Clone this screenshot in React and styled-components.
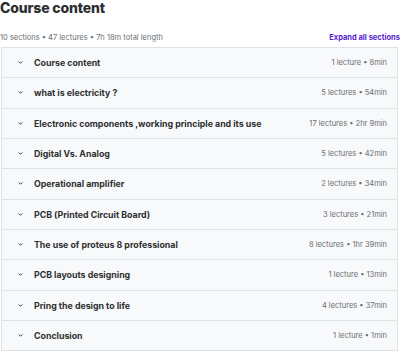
import React from "react";
import styled, { createGlobalStyle } from "styled-components";

const Global = createGlobalStyle`
  html, body { margin: 0; padding: 0; background: #fff; }
  body { font-family: Inter, "Noto Sans", sans-serif; color: #2d2f31; }
`;

const Page = styled.div`
  width: 400px;
  display: flex;
  flex-direction: column;
`;

const Title = styled.h2`
  margin: 0;
  font-size: 14px;
  line-height: 16px;
  font-weight: 800;
  letter-spacing: -0.15px;
`;

const Summary = styled.div`
  display: flex;
  justify-content: space-between;
  align-items: center;
  margin-top: 14px;
  height: 14px;
  font-size: 7.5px;
  color: #6a6f73;
`;

const Expand = styled.button`
  border: 0;
  background: none;
  padding: 0;
  font: inherit;
  font-weight: 700;
  color: #5624d0;
  cursor: pointer;
`;

const Table = styled.div`
  margin-top: 3px;
  margin-left: 1px;
  width: 397px;
  border: 1px solid #dfe3e6;
  border-bottom: 0;
  box-sizing: border-box;
`;

const Row = styled.div`
  display: flex;
  align-items: center;
  height: 29.33px;
  border-bottom: 1px solid #dfe3e6;
  background: #f8f9fa;
  padding: 0 10px 0 14px;
`;

const Chevron = styled.svg`
  width: 9px;
  height: 9px;
  flex: none;
  margin-right: 9px;
  color: #2d2f31;
`;

const SectionTitle = styled.span`
  flex: 1;
  font-size: 8.8px;
  font-weight: 700;
  color: #2d2f31;
  white-space: nowrap;
`;

const Meta = styled.span`
  font-size: 7.5px;
  color: #6a6f73;
  white-space: nowrap;
`;

const sections = [
  ["Course content", "1 lecture • 8min"],
  ["what is electricity ?", "5 lectures • 54min"],
  ["Electronic components ,working principle and its use", "17 lectures • 2hr 9min"],
  ["Digital Vs. Analog", "5 lectures • 42min"],
  ["Operational amplifier", "2 lectures • 34min"],
  ["PCB (Printed Circuit Board)", "3 lectures • 21min"],
  ["The use of proteus 8 professional", "8 lectures • 1hr 39min"],
  ["PCB layouts designing", "1 lecture • 13min"],
  ["Pring the design to life", "4 lectures • 37min"],
  ["Conclusion", "1 lecture • 1min"],
];

export default function App() {
  return (
    <Page>
      <Global />
      <Title>Course content</Title>
      <Summary>
        <span>10 sections • 47 lectures • 7h 18m total length</span>
        <Expand>Expand all sections</Expand>
      </Summary>
      <Table>
        {sections.map(([t, m]) => (
          <Row key={t}>
            <Chevron viewBox="0 0 24 24" fill="none" stroke="currentColor" strokeWidth="2.5" strokeLinecap="round" strokeLinejoin="round">
              <path d="M8 10l4 4 4-4" />
            </Chevron>
            <SectionTitle>{t}</SectionTitle>
            <Meta>{m}</Meta>
          </Row>
        ))}
      </Table>
    </Page>
  );
}
